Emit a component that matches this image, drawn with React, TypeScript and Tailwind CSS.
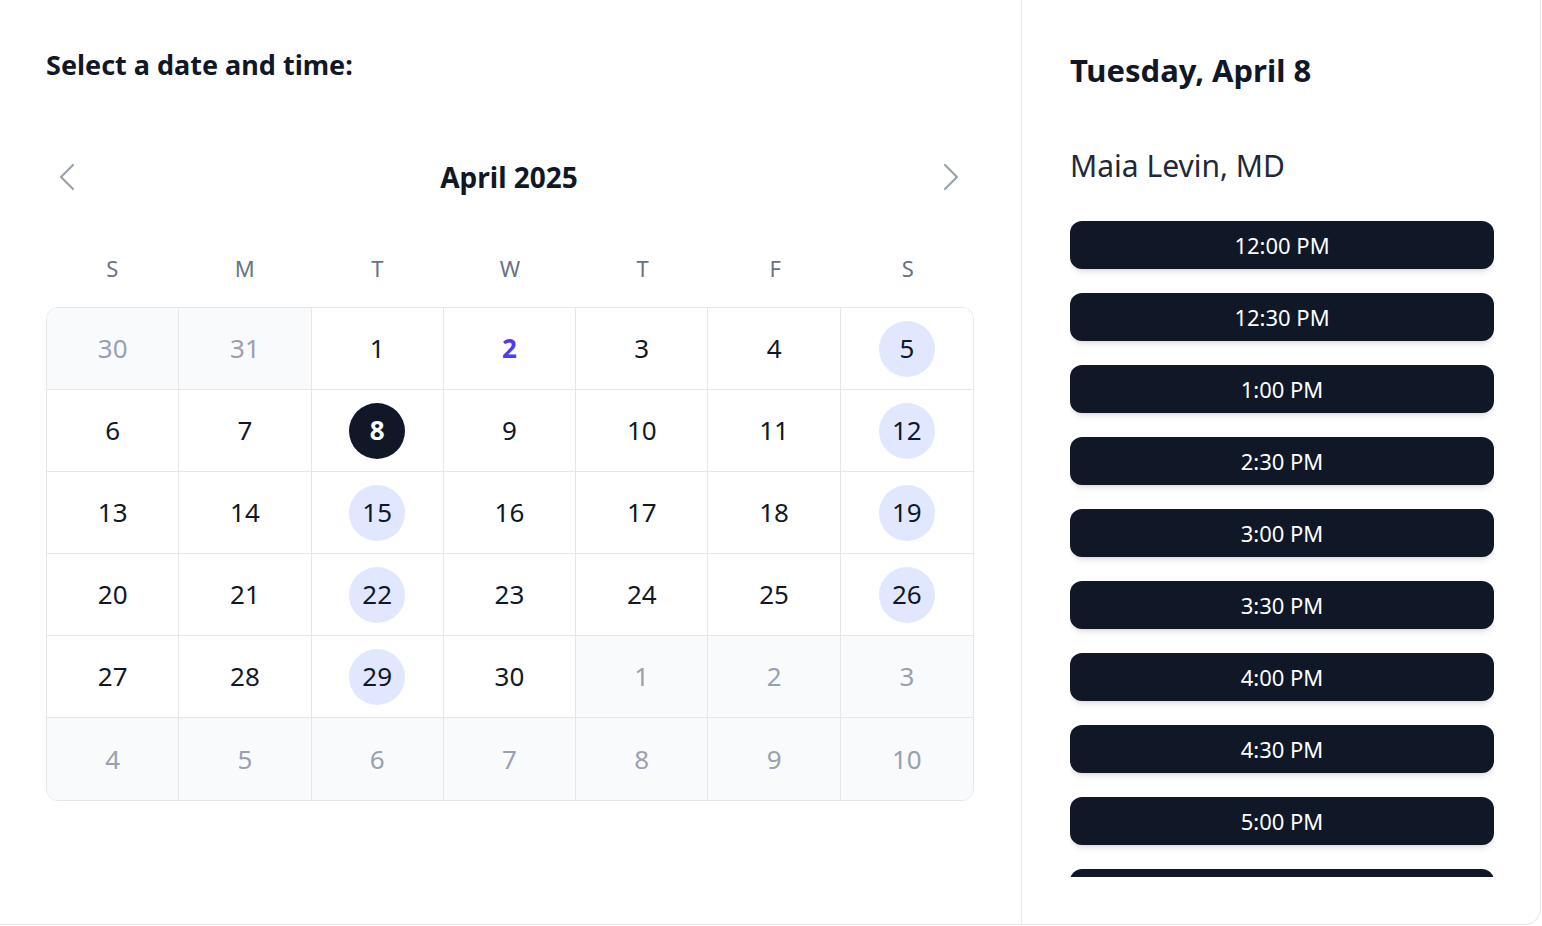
import { ChevronLeft, ChevronRight } from 'lucide-react';

const WEEKDAYS = ['S', 'M', 'T', 'W', 'T', 'F', 'S'];

type Day = { n: number; inMonth: boolean };

const DAYS: Day[] = [
  { n: 30, inMonth: false },
  { n: 31, inMonth: false },
  ...Array.from({ length: 30 }, (_, i) => ({ n: i + 1, inMonth: true })),
  ...Array.from({ length: 10 }, (_, i) => ({ n: i + 1, inMonth: false })),
];

const AVAILABLE = [5, 12, 15, 19, 22, 26, 29];
const TODAY = 2;
const SELECTED = 8;

const TIMES = ['12:00 PM', '12:30 PM', '1:00 PM', '2:30 PM', '3:00 PM', '3:30 PM', '4:00 PM', '4:30 PM', '5:00 PM', '5:30 PM'];

function DayCell({ day, index }: { day: Day; index: number }) {
  const col = index % 7;
  const row = Math.floor(index / 7);
  const borders = `${col < 6 ? 'border-r' : ''} ${row < 5 ? 'border-b' : ''}`;

  let inner = <span className="text-gray-400">{day.n}</span>;
  if (day.inMonth) {
    if (day.n === SELECTED) {
      inner = (
        <span className="flex h-14 w-14 items-center justify-center rounded-full bg-gray-900 font-bold text-white">{day.n}</span>
      );
    } else if (AVAILABLE.includes(day.n)) {
      inner = (
        <span className="flex h-14 w-14 items-center justify-center rounded-full bg-indigo-100 text-gray-900">{day.n}</span>
      );
    } else if (day.n === TODAY) {
      inner = <span className="font-bold text-indigo-600">{day.n}</span>;
    } else {
      inner = <span className="text-gray-900">{day.n}</span>;
    }
  }

  return (
    <div className={`flex h-[82px] items-center justify-center border-gray-200 ${borders} ${day.inMonth ? 'bg-white' : 'bg-gray-50'}`}>
      {inner}
    </div>
  );
}

export default function App() {
  return (
    <div className="h-[926px] w-[1542px] overflow-hidden bg-white font-['Noto_Sans',sans-serif] text-gray-900">
      <div className="flex h-[925px] w-[1541px] rounded-br-2xl border-r border-b border-gray-200">
        {/* Left: calendar */}
        <div className="w-[1021px] shrink-0 px-[46px] pt-[47px]">
          <h2 className="text-[27px] leading-[36px] font-bold">Select a date and time:</h2>

          <div className="mt-[70px] flex w-[928px] items-center justify-between">
            <button type="button" className="-ml-[3px] text-gray-400">
              <ChevronLeft className="h-12 w-12" strokeWidth={1.1} />
            </button>
            <div className="text-[28px] leading-[48px] font-bold">April 2025</div>
            <button type="button" className="-mr-[1px] text-gray-400">
              <ChevronRight className="h-12 w-12" strokeWidth={1.1} />
            </button>
          </div>

          <div className="mt-[53px] grid w-[928px] grid-cols-7 text-[22px] leading-[28px] text-gray-500">
            {WEEKDAYS.map((w, i) => (
              <div key={i} className="text-center">{w}</div>
            ))}
          </div>

          <div className="mt-[25px] grid w-[928px] grid-cols-7 overflow-hidden rounded-xl border border-gray-200 text-[26px]">
            {DAYS.map((d, i) => (
              <DayCell key={i} day={d} index={i} />
            ))}
          </div>
        </div>

        {/* Right: times */}
        <div className="flex flex-1 flex-col border-l border-gray-200 pl-[48px] pr-[46px] pt-[50px]">
          <h2 className="text-[31px] leading-[40px] font-bold">Tuesday, April 8</h2>
          <div className="mt-[56px] text-[30px] leading-[40px] text-gray-800">Maia Levin, MD</div>
          <div className="mt-[35px] h-[656px] overflow-hidden">
            <div className="flex flex-col gap-6 pb-4">
              {TIMES.map((t) => (
                <button
                  key={t}
                  type="button"
                  className="h-12 w-full shrink-0 rounded-xl bg-gray-900 text-[22px] text-white shadow-md"
                >
                  {t}
                </button>
              ))}
            </div>
          </div>
        </div>
      </div>
    </div>
  );
}
